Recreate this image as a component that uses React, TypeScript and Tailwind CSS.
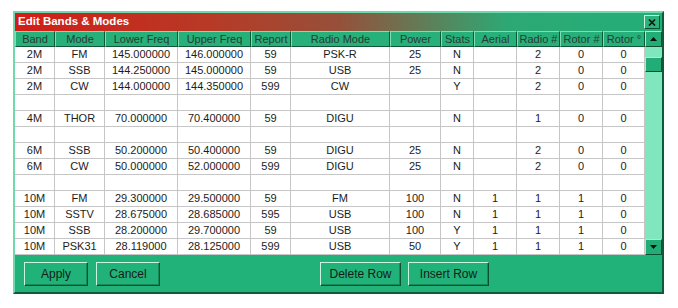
import React from 'react'

const columns = [
  {label: 'Band', w: 'w-[40px]'},
  {label: 'Mode', w: 'w-[50px]'},
  {label: 'Lower Freq', w: 'w-[73px]'},
  {label: 'Upper Freq', w: 'w-[73px]'},
  {label: 'Report', w: 'w-[40px]'},
  {label: 'Radio Mode', w: 'w-[99px]'},
  {label: 'Power', w: 'w-[51px]'},
  {label: 'Stats', w: 'w-[33px]'},
  {label: 'Aerial', w: 'w-[43px]'},
  {label: 'Radio #', w: 'w-[43px]'},
  {label: 'Rotor #', w: 'w-[43px]'},
  {label: 'Rotor °', w: 'w-[42px]'},
]

const rows: string[][] = [
  ['2M', 'FM', '145.000000', '146.000000', '59', 'PSK-R', '25', 'N', '', '2', '0', '0'],
  ['2M', 'SSB', '144.250000', '145.000000', '59', 'USB', '25', 'N', '', '2', '0', '0'],
  ['2M', 'CW', '144.000000', '144.350000', '599', 'CW', '', 'Y', '', '2', '0', '0'],
  [],
  ['4M', 'THOR', '70.000000', '70.400000', '59', 'DIGU', '', 'N', '', '1', '0', '0'],
  [],
  ['6M', 'SSB', '50.200000', '50.400000', '59', 'DIGU', '25', 'N', '', '2', '0', '0'],
  ['6M', 'CW', '50.000000', '52.000000', '599', 'DIGU', '25', 'N', '', '2', '0', '0'],
  [],
  ['10M', 'FM', '29.300000', '29.500000', '59', 'FM', '100', 'N', '1', '1', '1', '0'],
  ['10M', 'SSTV', '28.675000', '28.685000', '595', 'USB', '100', 'N', '1', '1', '1', '0'],
  ['10M', 'SSB', '28.200000', '29.700000', '59', 'USB', '100', 'Y', '1', '1', '1', '0'],
  ['10M', 'PSK31', '28.119000', '28.125000', '599', 'USB', '50', 'Y', '1', '1', '1', '0'],
]

function Btn({label, w}: {label: string; w: string}) {
  return (
    <button
      className={`${w} h-[24px] border border-t-[#c8f3df] border-l-[#c8f3df] border-r-[#0c4f31] border-b-[#0c4f31] bg-[#21b27a] text-[12px] text-[#142018] shadow-[inset_-1px_-1px_0_#178a5c]`}
    >
      {label}
    </button>
  )
}

function Arrow({down}: {down?: boolean}) {
  return (
    <div className="flex h-[16px] w-[17px] items-center justify-center border border-t-[#a8ecd0] border-l-[#a8ecd0] border-r-[#0c4f31] border-b-[#0c4f31] bg-[#22ad77]">
      <svg width="7" height="4" viewBox="0 0 7 4">
        <path d={down ? 'M0 0h7L3.5 4z' : 'M0 4h7L3.5 0z'} fill="#101010" />
      </svg>
    </div>
  )
}

export default function App() {
  return (
    <div className="h-[308px] w-[678px] bg-white pl-[13px] pt-[11px] font-['Liberation_Sans',Arial,sans-serif]">
      <div className="flex h-[283px] w-[651px] flex-col border-2 border-t-[#6fd9ad] border-l-[#6fd9ad] border-r-[#0f5a39] border-b-[#0f5a39] bg-[#21b27a]">
        {/* title bar */}
        <div className="flex h-[18px] items-center justify-between bg-[linear-gradient(to_right,#d21d17_0%,#b73a26_30%,#96503a_50%,#2da874_76%,#23ae78_100%)] pl-[3px] pr-[2px]">
          <span className="text-[11.5px] font-bold text-white">Edit Bands &amp; Modes</span>
          <div className="flex h-[14px] w-[16px] items-center justify-center border border-t-[#c8f3df] border-l-[#c8f3df] border-r-[#0c4f31] border-b-[#0c4f31] bg-[#2ab37d]">
            <svg width="8" height="7" viewBox="0 0 8 7">
              <path d="M1 0.5L7 6.5M7 0.5L1 6.5" stroke="#101010" strokeWidth="1.6" />
            </svg>
          </div>
        </div>

        {/* grid + scrollbar */}
        <div className="flex">
          <div className="flex flex-col">
            <div className="flex h-[16px]">
              {columns.map((c) => (
                <div
                  key={c.label}
                  className={`${c.w} flex items-center justify-center overflow-hidden whitespace-nowrap border border-t-[#7fdcb4] border-l-[#7fdcb4] border-r-[#0e5636] border-b-[#0e5636] bg-[#27b07a] text-[11px] text-[#2a3a32]`}
                >
                  {c.label}
                </div>
              ))}
            </div>
            {rows.map((r, i) => (
              <div key={i} className="flex h-[16px] bg-white">
                {columns.map((c, j) => (
                  <div
                    key={j}
                    className={`${c.w} flex items-center justify-center border-r border-b border-[#c6c6c6] text-[11px] text-[#1c1c1c]`}
                  >
                    {r[j] ?? ''}
                  </div>
                ))}
              </div>
            ))}
          </div>

          {/* scrollbar */}
          <div className="flex w-[17px] flex-col bg-[#80e6bd]">
            <Arrow />
            <div className="flex flex-1 flex-col pt-[10px]">
              <div className="h-[15px] w-[17px] border border-t-[#a8ecd0] border-l-[#a8ecd0] border-r-[#0c4f31] border-b-[#0c4f31] bg-[#22ad77]" />
            </div>
            <Arrow down />
          </div>
        </div>

        {/* buttons */}
        <div className="flex flex-1 items-center pl-[9px]">
          <div className="flex gap-[8px]">
            <Btn label="Apply" w="w-[64px]" />
            <Btn label="Cancel" w="w-[64px]" />
          </div>
          <div className="ml-[160px] flex gap-[7px]">
            <Btn label="Delete Row" w="w-[81px]" />
            <Btn label="Insert Row" w="w-[81px]" />
          </div>
        </div>
      </div>
    </div>
  )
}
